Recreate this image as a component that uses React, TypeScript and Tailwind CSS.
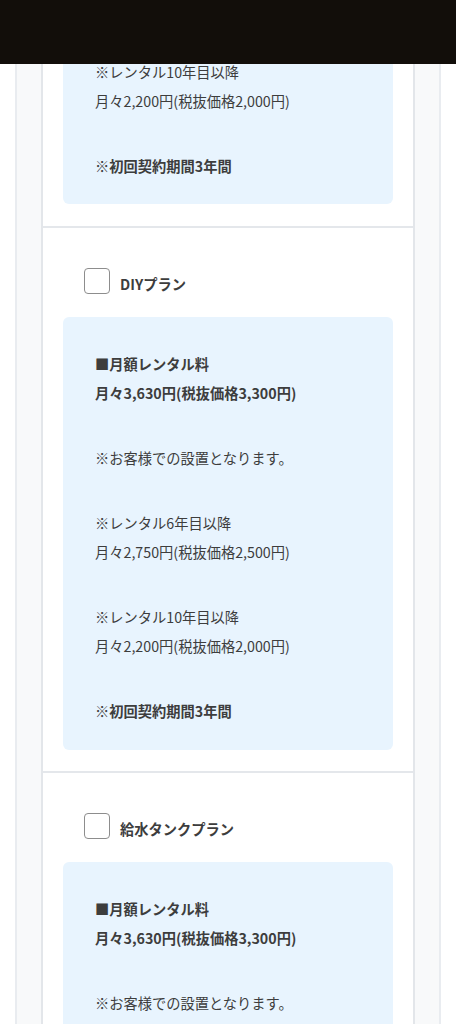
import React from "react";

type Line = { text: string; bold?: boolean };
type Group = Line[];

const font = { fontFamily: '"Noto Sans CJK JP", "Noto Sans", sans-serif' };

function InfoBox({ groups, top }: { groups: Group[]; top?: boolean }) {
  return (
    <div
      className={`rounded-[6px] bg-[#e8f4fe] px-[32px] ${top ? "pt-[57px] pb-[24px] rounded-t-none" : "pt-[32px] pb-[25px]"} flex flex-col gap-[36px]`}
    >
      {groups.map((g, i) => (
        <div key={i} className="flex flex-col">
          {g.map((l, j) => (
            <p
              key={j}
              className={`text-[14.25px] leading-[29px] text-[#3d3d3d] ${l.bold ? "font-bold" : "font-normal"}`}
            >
              {l.text}
            </p>
          ))}
        </div>
      ))}
    </div>
  );
}

function Plan({ name, groups }: { name: string; groups: Group[] }) {
  return (
    <div className="border-t-2 border-[#e4e7eb] px-[20px] pt-[40px] pb-[21px]">
      <div className="flex items-start h-[26px] pl-[21px] mb-[23px]">
        <div className="w-[26px] h-[26px] rounded-[4px] border-[1.5px] border-[#8d8d8d] bg-white shrink-0" />
        <span className="ml-[10px] mt-[7px] text-[14.25px] font-bold text-[#3d3d3d] leading-[18px]">{name}</span>
      </div>
      <InfoBox groups={groups} />
    </div>
  );
}

const fullGroups: Group[] = [
  [
    { text: "■月額レンタル料", bold: true },
    { text: "月々3,630円(税抜価格3,300円)", bold: true },
  ],
  [{ text: "※お客様での設置となります。" }],
  [{ text: "※レンタル6年目以降" }, { text: "月々2,750円(税抜価格2,500円)" }],
  [{ text: "※レンタル10年目以降" }, { text: "月々2,200円(税抜価格2,000円)" }],
  [{ text: "※初回契約期間3年間", bold: true }],
];

export default function App() {
  return (
    <div className="relative min-h-[1024px] h-[1024px] overflow-hidden bg-white" style={font}>
      <div className="absolute top-0 left-0 right-0 h-[64px] bg-[#120e0a] z-10" />
      <div className="ml-[15px] w-[426px] h-full border-x-2 border-[#e9ecf0] bg-[#f8f9fa] px-[24px]">
        <div className="h-full bg-white border-x-2 border-[#e3e6ea]">
          <div className="px-[20px] pb-[22px]">
            <InfoBox
              top
              groups={[
                [{ text: "※レンタル10年目以降" }, { text: "月々2,200円(税抜価格2,000円)" }],
                [{ text: "※初回契約期間3年間", bold: true }],
              ]}
            />
          </div>
          <Plan name="DIYプラン" groups={fullGroups} />
          <Plan name="給水タンクプラン" groups={fullGroups} />
        </div>
      </div>
    </div>
  );
}
